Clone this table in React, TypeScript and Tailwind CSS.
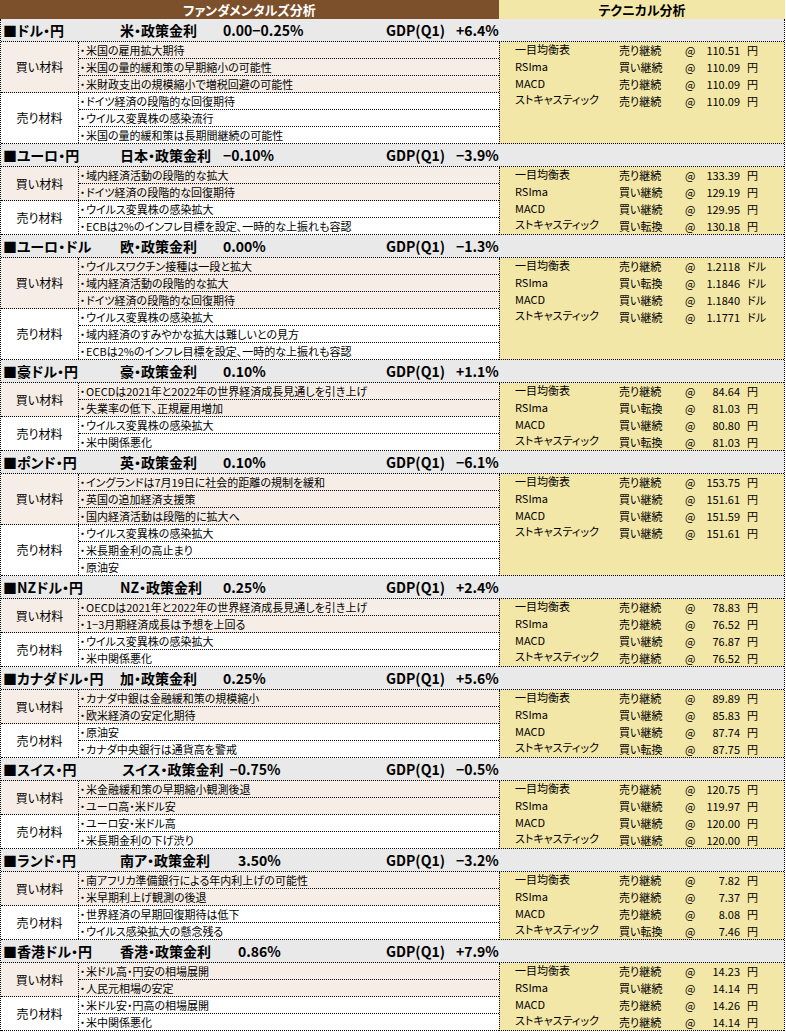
import React from "react";

type Section = {
  pair: string;
  policy: string;
  labelW: string;
  rate: string;
  gdp: string;
  buy: string[];
  sell: string[];
  unit: string;
  tech: [string, string][];
};

const techNames = ["一目均衡表", "RSIma", "MACD", "ストキャスティック"];

const sections: Section[] = [
  {
    pair: "■ドル・円",
    policy: "米・政策金利",
    labelW: "w-[103px]",
    rate: "0.00−0.25%",
    gdp: "+6.4%",
    buy: ["米国の雇用拡大期待", "米国の量的緩和策の早期縮小の可能性", "米財政支出の規模縮小で増税回避の可能性"],
    sell: ["ドイツ経済の段階的な回復期待", "ウイルス変異株の感染流行", "米国の量的緩和策は長期間継続の可能性"],
    unit: "円",
    tech: [["売り継続", "110.51"], ["買い継続", "110.09"], ["売り継続", "110.09"], ["売り継続", "110.09"]],
  },
  {
    pair: "■ユーロ・円",
    policy: "日本・政策金利",
    labelW: "w-[103px]",
    rate: "−0.10%",
    gdp: "−3.9%",
    buy: ["域内経済活動の段階的な拡大", "ドイツ経済の段階的な回復期待"],
    sell: ["ウイルス変異株の感染拡大", "ECBは2%のインフレ目標を設定、一時的な上振れも容認"],
    unit: "円",
    tech: [["売り継続", "133.39"], ["買い継続", "129.19"], ["買い継続", "129.95"], ["買い転換", "130.18"]],
  },
  {
    pair: "■ユーロ・ドル",
    policy: "欧・政策金利",
    labelW: "w-[103px]",
    rate: "0.00%",
    gdp: "−1.3%",
    buy: ["ウイルスワクチン接種は一段と拡大", "域内経済活動の段階的な拡大", "ドイツ経済の段階的な回復期待"],
    sell: ["ウイルス変異株の感染拡大", "域内経済のすみやかな拡大は難しいとの見方", "ECBは2%のインフレ目標を設定、一時的な上振れも容認"],
    unit: "ドル",
    tech: [["売り継続", "1.2118"], ["買い転換", "1.1846"], ["買い継続", "1.1840"], ["買い継続", "1.1771"]],
  },
  {
    pair: "■豪ドル・円",
    policy: "豪・政策金利",
    labelW: "w-[103px]",
    rate: "0.10%",
    gdp: "+1.1%",
    buy: ["OECDは2021年と2022年の世界経済成長見通しを引き上げ", "失業率の低下、正規雇用増加"],
    sell: ["ウイルス変異株の感染拡大", "米中関係悪化"],
    unit: "円",
    tech: [["売り継続", "84.64"], ["買い転換", "81.03"], ["買い継続", "80.80"], ["買い転換", "81.03"]],
  },
  {
    pair: "■ポンド・円",
    policy: "英・政策金利",
    labelW: "w-[103px]",
    rate: "0.10%",
    gdp: "−6.1%",
    buy: ["イングランドは7月19日に社会的距離の規制を緩和", "英国の追加経済支援策", "国内経済活動は段階的に拡大へ"],
    sell: ["ウイルス変異株の感染拡大", "米長期金利の高止まり", "原油安"],
    unit: "円",
    tech: [["売り継続", "153.75"], ["買い継続", "151.61"], ["買い継続", "151.59"], ["買い継続", "151.61"]],
  },
  {
    pair: "■NZドル・円",
    policy: "NZ・政策金利",
    labelW: "w-[103px]",
    rate: "0.25%",
    gdp: "+2.4%",
    buy: ["OECDは2021年と2022年の世界経済成長見通しを引き上げ", "1−3月期経済成長は予想を上回る"],
    sell: ["ウイルス変異株の感染拡大", "米中関係悪化"],
    unit: "円",
    tech: [["売り継続", "78.83"], ["売り継続", "76.52"], ["買い継続", "76.87"], ["売り継続", "76.52"]],
  },
  {
    pair: "■カナダドル・円",
    policy: "加・政策金利",
    labelW: "w-[103px]",
    rate: "0.25%",
    gdp: "+5.6%",
    buy: ["カナダ中銀は金融緩和策の規模縮小", "欧米経済の安定化期待"],
    sell: ["原油安", "カナダ中央銀行は通貨高を警戒"],
    unit: "円",
    tech: [["売り継続", "89.89"], ["買い継続", "85.83"], ["買い継続", "87.74"], ["買い転換", "87.75"]],
  },
  {
    pair: "■スイス・円",
    policy: "スイス・政策金利",
    labelW: "pl-[2px] pr-[6px]",
    rate: "−0.75%",
    gdp: "−0.5%",
    buy: ["米金融緩和策の早期縮小観測後退", "ユーロ高・米ドル安"],
    sell: ["ユーロ安・米ドル高", "米長期金利の下げ渋り"],
    unit: "円",
    tech: [["売り継続", "120.75"], ["買い継続", "119.97"], ["買い継続", "120.00"], ["買い継続", "120.00"]],
  },
  {
    pair: "■ランド・円",
    policy: "南ア・政策金利",
    labelW: "w-[118px]",
    rate: "3.50%",
    gdp: "−3.2%",
    buy: ["南アフリカ準備銀行による年内利上げの可能性", "米早期利上げ観測の後退"],
    sell: ["世界経済の早期回復期待は低下", "ウイルス感染拡大の懸念残る"],
    unit: "円",
    tech: [["売り継続", "7.82"], ["売り継続", "7.37"], ["売り継続", "8.08"], ["買い転換", "7.46"]],
  },
  {
    pair: "■香港ドル・円",
    policy: "香港・政策金利",
    labelW: "w-[118px]",
    rate: "0.86%",
    gdp: "+7.9%",
    buy: ["米ドル高・円安の相場展開", "人民元相場の安定"],
    sell: ["米ドル安・円高の相場展開", "米中関係悪化"],
    unit: "円",
    tech: [["売り継続", "14.23"], ["買い継続", "14.14"], ["売り継続", "14.26"], ["売り継続", "14.14"]],
  },
];

const Group = ({ label, items, bg }: { label: string; items: string[]; bg: string }) => (
  <div className={`flex border-b border-dotted border-black ${bg}`}>
    <div className="w-[78px] shrink-0 border-r border-dotted border-black flex items-center justify-center text-[12px]">
      {label}
    </div>
    <div className="flex-1 flex flex-col">
      {items.map((t, i) =>
        i < items.length - 1 ? (
          <div
            key={i}
            className="h-[17px] flex items-center text-[11px] whitespace-nowrap border-b border-dotted border-black"
          >
            <span className="w-[7px] shrink-0 text-center">・</span>
            {t}
          </div>
        ) : (
          <div key={i} className="h-[16px] flex items-center text-[11px] whitespace-nowrap">
            <span className="w-[7px] shrink-0 text-center">・</span>
            {t}
          </div>
        )
      )}
    </div>
  </div>
);

const SectionBlock = ({ s }: { s: Section }) => (
  <div>
    <div className="h-[23px] flex items-center border-b border-dotted border-black bg-[#e9e9e9] font-bold text-[14px] whitespace-nowrap">
      <div className="w-[119px] shrink-0 pl-[2px]">{s.pair}</div>
      <div className="w-[266px] shrink-0 flex">
        <div className={`${s.labelW} shrink-0`}>{s.policy}</div>
        <div>{s.rate}</div>
      </div>
      <div className="w-[70px] shrink-0">GDP(Q1)</div>
      <div>{s.gdp}</div>
    </div>
    <div className="flex">
      <div className="w-[498px] shrink-0">
        <Group label="買い材料" items={s.buy} bg="bg-[#f6eee6]" />
        <Group label="売り材料" items={s.sell} bg="bg-white" />
      </div>
      <div className="flex-1 bg-[#f3e7a7] border-l border-b border-dotted border-black pl-[15px] text-[11px]">
        {s.tech.map(([st, price], i) => (
          <div
            key={i}
            className={`${i < 3 ? "h-[17px]" : "h-[16px]"} flex items-center whitespace-nowrap`}
          >
            <div className="w-[104px] shrink-0 pb-[3px]">{techNames[i]}</div>
            <div className="w-[66px] shrink-0">{st}</div>
            <div className="w-[20px] shrink-0">@</div>
            <div className="w-[35px] shrink-0 text-right">{price}</div>
            <div className="pl-[7px]">{s.unit}</div>
          </div>
        ))}
      </div>
    </div>
  </div>
);

export default function App() {
  return (
    <div className="w-[786px] h-[1033px] bg-white text-black font-['Noto_Sans_CJK_JP','Noto_Sans',sans-serif] [font-feature-settings:'palt'] leading-none">
      <div className="w-[785px] h-[19px] flex font-bold text-[13px]">
        <div className="w-[499px] bg-[#7c502a] text-white flex items-center justify-center">
          ファンダメンタルズ分析
        </div>
        <div className="flex-1 bg-[#f3e7a7] flex items-center justify-center">テクニカル分析</div>
      </div>
      <div className="w-[785px] border-x border-dotted border-black">
        {sections.map((s, i) => (
          <SectionBlock key={i} s={s} />
        ))}
      </div>
    </div>
  );
}
